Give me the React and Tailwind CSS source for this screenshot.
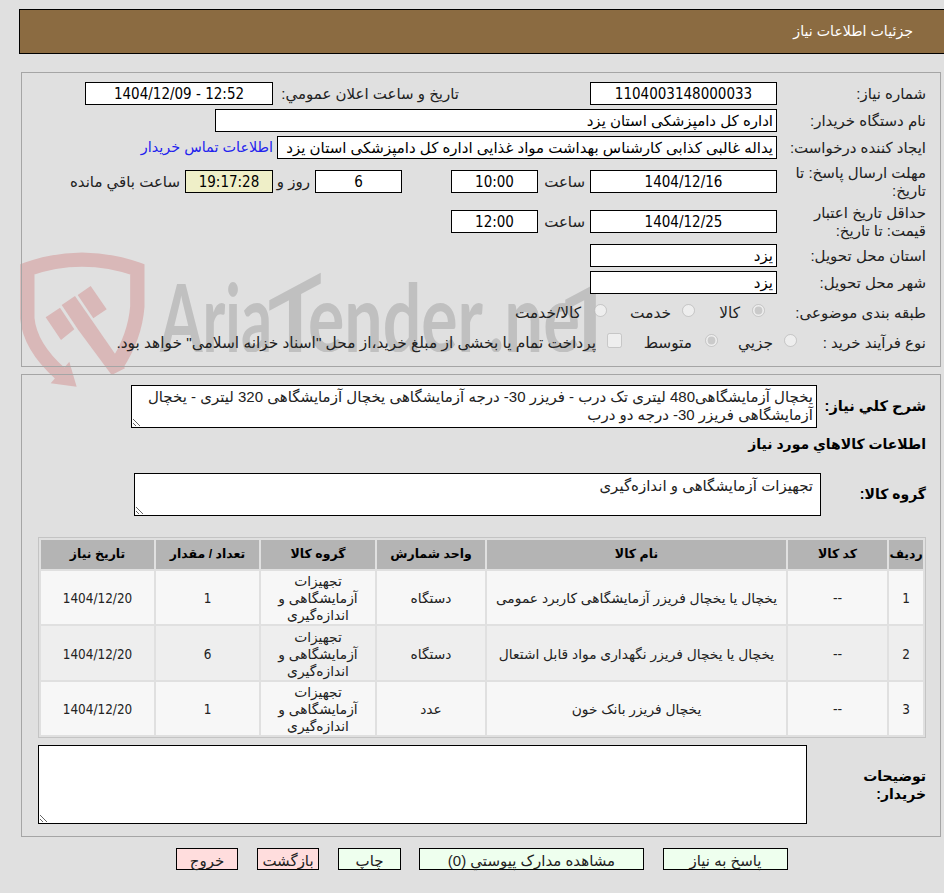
import React from "react";

const inputCls = "h-[23px] border border-black px-[3px] text-[15px] text-black outline-none";
const labelCls = "text-[15px] leading-[18px] text-[#222]";
const digitCls = "font-['DejaVu_Sans_Condensed','Liberation_Sans',sans-serif] text-[14.2px]";
const cellDigitCls = "pt-[2px] font-['DejaVu_Sans_Condensed','Liberation_Sans',sans-serif] text-[13.4px]";

const Field = ({ value, className = "bg-white", center = false, width = "" }) => (
  <input
    readOnly
    value={value}
    className={`${inputCls} ${center ? `text-center ${digitCls}` : "text-right"} ${width} ${className}`}
  />
);

const Label = ({ children, className = "" }) => (
  <div className={`w-[163px] shrink-0 pl-[8px] pr-[14px] ${labelCls} ${className}`}>{children}</div>
);

const Watermark = () => (
  <div className="absolute left-0 top-0 h-[400px] w-[640px]">
    <svg dir="ltr" width="640" height="400" viewBox="0 0 640 400" className="absolute inset-0">
      <defs>
        <clipPath id="wm-clip">
          <rect x="150" y="260" width="480" height="92" />
        </clipPath>
      </defs>
      <g transform="translate(10 240) scale(0.3333)" fill="#d9b8b8">
        <path
          d="M150 400 Q60 320 52 235 L52 88 Q215 30 382 88 L382 200 Q375 290 320 375"
          fill="none"
          stroke="#d9b8b8"
          strokeWidth="43"
        />
        <polygon points="178,365 200,440 122,430" />
        <polygon points="107,232 150,203 193,268 153,300" />
        <polygon points="155,195 195,168 245,240 345,385 305,405 205,270" />
        <polygon points="203,165 242,138 290,208 250,235" />
      </g>
      <g clipPath="url(#wm-clip)">
        <g fill="#c0c0c0" fontFamily="'Lato', sans-serif" fontWeight="700" fontSize="94" direction="ltr">
          <text x="160" y="352" textLength="112" lengthAdjust="spacingAndGlyphs">Aria</text>
          <text transform="translate(295 356) skewY(-28)" x="-27" y="0" fontSize="96" textLength="54" lengthAdjust="spacingAndGlyphs">T</text>
          <text x="308" y="352" textLength="175" lengthAdjust="spacingAndGlyphs">ender</text>
          <text x="488" y="352" textLength="92" lengthAdjust="spacingAndGlyphs">.ne</text>
          <text transform="translate(590 356) skewY(-28)" x="-26" y="0" fontSize="96" textLength="52" lengthAdjust="spacingAndGlyphs">T</text>
        </g>
      </g>
    </svg>
  </div>
);

const rows = [
  { id: 1, name: "یخچال یا یخچال فریزر آزمایشگاهی کاربرد عمومی", unit: "دستگاه", qty: 1, bg: "bg-[#f7f7f7]", h: "h-[53px]" },
  { id: 2, name: "یخچال یا یخچال فریزر نگهداری مواد قابل اشتعال", unit: "دستگاه", qty: 6, bg: "bg-[#eeeeee]", h: "h-[54px]" },
  { id: 3, name: "یخچال فریزر بانک خون", unit: "عدد", qty: 1, bg: "bg-[#f7f7f7]", h: "h-[53px]" },
];

const thCls = "bg-[#b4b4b4] text-[12.5px] font-bold text-black";
const btnCls = "h-[22px] border border-black pt-[3px] leading-[16px]";

export default function App() {
  return (
    <div
      dir="rtl"
      className="relative min-h-screen overflow-hidden bg-[#e0e0e0] font-['Liberation_Sans','DejaVu_Sans',sans-serif] text-[15px] text-[#222]"
    >
      <Watermark />

      <div className="relative">
        {/* Header */}
        <div className="ml-[19px] mt-[9px] flex h-[45px] items-center border border-r-0 border-black bg-[#8b6b41] pr-[31px] text-[14.2px] text-white">
          جزئیات اطلاعات نیاز
        </div>

        {/* Main info */}
        <div className="ml-[21px] mr-[3px] mt-[18px] h-[295px] border border-[#a5a5a5] pt-[9px]">
          <div className="flex h-[23px] items-center">
            <Label>شماره نیاز:</Label>
            <Field center value="1104003148000033" width="w-[187px]" />
            <div className={`mr-[131px] w-[186px] ${labelCls}`}>تاریخ و ساعت اعلان عمومي:</div>
            <Field center value="12:52 - 1404/12/09" width="w-[188px]" />
          </div>

          <div className="mt-[4px] flex h-[23px] items-center">
            <Label>نام دستگاه خریدار:</Label>
            <Field value="اداره کل دامپزشکی استان یزد" width="w-[562px]" />
          </div>

          <div className="mt-[4px] flex h-[23px] items-center">
            <Label>ایجاد کننده درخواست:</Label>
            <Field
              value="یداله غالبی کذابی کارشناس بهداشت مواد غذایی اداره کل دامپزشکی استان یزد"
              width="w-[500px]"
            />
            <a href="#" className="mr-[4px] text-[14.4px] text-[#2222ee]">
              اطلاعات تماس خریدار
            </a>
          </div>

          <div className="mt-[11px] flex h-[23px] items-center">
            <Label>مهلت ارسال پاسخ: تا تاریخ:</Label>
            <Field center value="1404/12/16" width="w-[187px]" />
            <div className={`w-[52px] pr-[5px] ${labelCls}`}>ساعت</div>
            <Field center value="10:00" width="w-[87px]" />
            <Field center value="6" width="mr-[49px] w-[87px]" />
            <div className={`w-[42px] pr-[5px] ${labelCls}`}>روز و</div>
            <Field center value="19:17:28" width="w-[88px]" className="bg-[#efefc8]" />
            <div className={`mr-[5px] ${labelCls}`}>ساعت باقي مانده</div>
          </div>

          <div className="mt-[17px] flex h-[23px] items-center">
            <Label>حداقل تاریخ اعتبار قیمت: تا تاریخ:</Label>
            <Field center value="1404/12/25" width="w-[187px]" />
            <div className={`w-[52px] pr-[5px] ${labelCls}`}>ساعت</div>
            <Field center value="12:00" width="w-[87px]" />
          </div>

          <div className="mt-[11px] flex h-[23px] items-center">
            <Label>استان محل تحویل:</Label>
            <Field value="یزد" width="w-[187px]" />
          </div>

          <div className="mt-[4px] flex h-[23px] items-center">
            <Label>شهر محل تحویل:</Label>
            <Field value="یزد" width="w-[187px]" />
          </div>

          <div className="mt-[7px] flex h-[24px] items-center text-[15.4px]">
            <Label>طبقه بندی موضوعی:</Label>
            <input type="radio" disabled checked readOnly className="mr-[12px] ml-[12px] -mt-[6px]" />
            <span className="w-[45px]">کالا</span>
            <input type="radio" disabled className="ml-[11px] -mt-[6px]" />
            <span className="w-[64px]">خدمت</span>
            <input type="radio" disabled className="ml-[13px] -mt-[6px]" />
            <span>کالا/خدمت</span>
          </div>

          <div className="mt-[6px] flex h-[24px] items-center text-[15.4px]">
            <Label>نوع فرآیند خرید :</Label>
            <input type="radio" disabled className="mr-[-20px] ml-[11px] -mt-[6px]" />
            <span className="w-[55px]">جزيي</span>
            <input type="radio" disabled checked readOnly className="ml-[13px] -mt-[6px]" />
            <span className="w-[70px]">متوسط</span>
            <input type="checkbox" disabled className="ml-[11px] -mt-[6px] h-[15px] w-[15px]" />
            <span>پرداخت تمام یا بخشی از مبلغ خرید،از محل "اسناد خزانه اسلامی" خواهد بود.</span>
          </div>
        </div>

        {/* Description and goods */}
        <div className="ml-[21px] mr-[3px] mt-[7px] h-[463px] border border-[#a5a5a5] pt-[10px]">
          <div className="flex">
            <div className="flex h-[43px] w-[123px] shrink-0 items-center pr-[14px] text-[14.6px] font-bold text-black">
              شرح کلي نیاز:
            </div>
            <textarea
              readOnly
              defaultValue="یخچال آزمایشگاهی480 لیتری تک درب - فریزر 30- درجه آزمایشگاهی یخچال آزمایشگاهی 320 لیتری - یخچال آزمایشگاهی فریزر 30- درجه دو درب"
              className="h-[43px] w-[686px] border border-black bg-white px-[3px] pt-[2px] text-[15px] leading-[18px] text-[#222] outline-none"
            />
          </div>

          <div className="mt-[6px] pr-[14px] text-[14px] font-bold leading-[20px] text-black">
            اطلاعات کالاهاي مورد نیاز
          </div>

          <div className="mt-[19px] flex">
            <div className="flex h-[43px] w-[119px] shrink-0 items-center pr-[14px] text-[14px] font-bold text-black">
              گروه کالا:
            </div>
            <textarea
              readOnly
              defaultValue="تجهیزات آزمایشگاهی و اندازه‌گیری"
              className="h-[43px] w-[687px] border border-black bg-white px-[7px] pt-[3px] text-[15px] leading-[18px] text-[#222] outline-none"
            />
          </div>

          <table className="mr-[14px] mt-[21px] w-[888px] table-fixed border-separate border-spacing-[2px] border border-[#c4c4c4] text-center text-[13.8px] leading-[17px] text-[#222]">
            <thead>
              <tr className="h-[29px]">
                <th className={`w-[34px] ${thCls}`}>ردیف</th>
                <th className={`w-[99px] ${thCls}`}>کد کالا</th>
                <th className={`w-[299px] ${thCls}`}>نام کالا</th>
                <th className={`w-[108px] ${thCls}`}>واحد شمارش</th>
                <th className={`w-[114px] ${thCls}`}>گروه کالا</th>
                <th className={`w-[103px] ${thCls}`}>تعداد / مقدار</th>
                <th className={`w-[113px] ${thCls}`}>تاریخ نیاز</th>
              </tr>
            </thead>
            <tbody>
              {rows.map((r) => (
                <tr key={r.id} className={`${r.bg} ${r.h}`}>
                  <td className={cellDigitCls}>{r.id}</td>
                  <td className="pt-[2px]">--</td>
                  <td className="pt-[2px]">{r.name}</td>
                  <td className="pt-[2px]">{r.unit}</td>
                  <td className="px-[8px] pt-[2px]">تجهیزات آزمایشگاهی و اندازه‌گیری</td>
                  <td className={cellDigitCls}>{r.qty}</td>
                  <td className={cellDigitCls}>1404/12/20</td>
                </tr>
              ))}
            </tbody>
          </table>

          <div className="mt-[7px] flex">
            <div className="flex h-[79px] w-[133px] shrink-0 items-center pr-[14px] text-[14px] font-bold leading-[18px] text-black">
              توضیحات
              <br />
              خریدار:
            </div>
            <textarea
              readOnly
              className="h-[79px] w-[769px] border border-black bg-white outline-none"
            />
          </div>
        </div>

        {/* Actions */}
        <div className="mt-[11px] flex h-[23px] pr-[156px] text-[15px] text-[#222]">
          <button className={`w-[125px] bg-[#eeffee] ${btnCls}`}>پاسخ به نیاز</button>
          <button className={`mr-[19px] w-[225px] bg-[#eeffee] ${btnCls}`}>مشاهده مدارک پیوستي (0)</button>
          <button className={`mr-[18px] w-[63px] bg-[#eeffee] ${btnCls}`}>چاپ</button>
          <button className={`mr-[19px] w-[62px] bg-[#ffdddd] ${btnCls}`}>بازگشت</button>
          <button className={`mr-[19px] w-[62px] bg-[#ffdddd] ${btnCls}`}>خروج</button>
        </div>
      </div>
    </div>
  );
}
